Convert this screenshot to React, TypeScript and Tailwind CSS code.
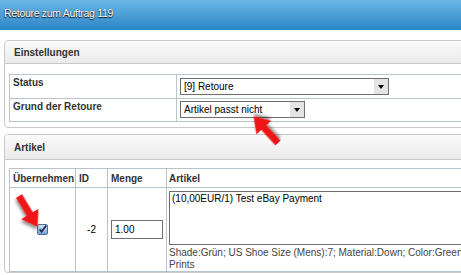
import React from 'react';
import clsx from 'clsx';

const line = 'border-[#b9c3cc]';

function Panel({
  title,
  headerClass,
  className,
  children,
}: {
  title: string;
  headerClass: string;
  className?: string;
  children: React.ReactNode;
}) {
  return (
    <div className={clsx('rounded-[4px] border border-[#c9c9c9] bg-white', className)}>
      <div
        className={clsx(
          'flex items-center rounded-t-[4px] border-b border-[#c9c9c9] bg-linear-to-b from-[#fbfbfb] to-[#eaeaea] pl-[9px] font-bold text-[#333]',
          headerClass,
        )}
      >
        {title}
      </div>
      {children}
    </div>
  );
}

function FakeSelect({ value, className }: { value: string; className: string }) {
  return (
    <div className={clsx('flex h-[17px] border border-[#6e6e6e] bg-white', className)}>
      <span className="flex-1 pl-[3px] leading-[15px]">{value}</span>
      <span className="flex w-[14px] items-center justify-center bg-[#e4e4e4]">
        <span className="h-0 w-0 border-x-[3.5px] border-t-[4px] border-x-transparent border-t-black" />
      </span>
    </div>
  );
}

function Checkbox() {
  return (
    <svg width="11" height="11" viewBox="0 0 11 11">
      <defs>
        <linearGradient id="cb" x1="0" y1="0" x2="0" y2="1">
          <stop offset="0" stopColor="#d7e6f8" />
          <stop offset="1" stopColor="#6f9fd6" />
        </linearGradient>
      </defs>
      <rect x="0.5" y="0.5" width="10" height="10" rx="1.5" fill="url(#cb)" stroke="#4d6f9c" />
      <path d="M2.6 5.4 L4.6 7.6 L9.2 1.6" fill="none" stroke="#1b2c4e" strokeWidth="1.7" />
    </svg>
  );
}

function Arrow({ x, y, angle, len }: { x: number; y: number; angle: number; len: number }) {
  const h = len - 15;
  return (
    <polygon
      points={`0,-3.5 ${h},-3.5 ${h},-10 ${len},0 ${h},10 ${h},3.5 0,3.5`}
      transform={`translate(${x} ${y}) rotate(${angle})`}
      fill="#ee1717"
      filter="url(#sh)"
    />
  );
}

export default function App() {
  return (
    <div className="relative h-[275px] w-[461px] overflow-hidden bg-white font-['Liberation_Sans',Arial,sans-serif] text-[10px] text-black">
      <div className="h-[30px] bg-linear-to-b from-[#6bb7e7] to-[#2985c6] px-[4px] pt-[6px] text-[10.5px] leading-[14px] tracking-[-0.3px] text-white [text-shadow:0_1px_1px_rgba(0,0,0,0.9),0_0_1px_rgba(0,0,0,0.6)]">
        Retoure zum Auftrag 119
      </div>

      <div className="w-[640px] px-[4px] pt-[10px]">
        <Panel title="Einstellungen" headerClass="h-[23px]">
          <div className="px-[4px] pt-[10px] pb-[5px]">
            <div className={clsx('border', line)}>
              <div className={clsx('flex h-[24px] border-b', line)}>
                <div className={clsx('w-[167px] border-r pt-[2px] pl-[3px] leading-[12px] font-bold text-[#333]', line)}>
                  Status
                </div>
                <div className="pt-[3px] pl-[3px]">
                  <FakeSelect value="[9] Retoure" className="w-[209px]" />
                </div>
              </div>
              <div className="flex h-[22px]">
                <div className={clsx('w-[167px] border-r pt-[2px] pl-[3px] leading-[12px] font-bold text-[#333]', line)}>
                  Grund der Retoure
                </div>
                <div className="pt-[2px] pl-[3px]">
                  <FakeSelect value="Artikel passt nicht" className="w-[125px]" />
                </div>
              </div>
            </div>
          </div>
        </Panel>

        <Panel title="Artikel" headerClass="h-[25px]" className="mt-[6px]">
          <div className="px-[4px] pt-[8px]">
            <div className={clsx('border', line)}>
              <div className={clsx('flex h-[19px] border-b font-bold text-[#333]', line)}>
                <div className={clsx('flex w-[66px] items-center border-r pl-[3px]', line)}>Übernehmen</div>
                <div className={clsx('flex w-[32px] items-center border-r pl-[3px]', line)}>ID</div>
                <div className={clsx('flex w-[59px] items-center border-r pl-[3px]', line)}>Menge</div>
                <div className="flex flex-1 items-center pl-[2px]">Artikel</div>
              </div>
              <div className="flex h-[83px]">
                <div className={clsx('flex w-[66px] items-center justify-center border-r', line)}>
                  <Checkbox />
                </div>
                <div className={clsx('flex w-[32px] items-center justify-center border-r', line)}>-2</div>
                <div className={clsx('flex w-[59px] items-center border-r pl-[3px]', line)}>
                  <input
                    readOnly
                    defaultValue="1.00"
                    className="h-[19px] w-[52px] border border-[#6e6e6e] bg-white pl-[3px] text-[10px] outline-none"
                  />
                </div>
                <div className="flex-1 pt-[3px] pl-[2px]">
                  <div className="h-[54px] w-[420px] border border-[#6e6e6e] px-[2px] pt-[1px] leading-[12px]">
                    (10,00EUR/1) Test eBay Payment
                  </div>
                  <div className="mt-[2px] leading-[12px] whitespace-nowrap text-[#444]">
                    Shade:Grün; US Shoe Size (Mens):7; Material:Down; Color:Greens
                    <br />
                    Prints
                  </div>
                </div>
              </div>
            </div>
          </div>
        </Panel>
      </div>

      <svg className="pointer-events-none absolute inset-0" width="461" height="275">
        <defs>
          <filter id="sh" x="-50%" y="-50%" width="200%" height="200%">
            <feDropShadow dx="2" dy="2" stdDeviation="1.5" floodColor="#000" floodOpacity="0.45" />
          </filter>
        </defs>
        <Arrow x={278} y={143} angle={227.4} len={36} />
        <Arrow x={19} y={196} angle={59} len={36} />
      </svg>
    </div>
  );
}
